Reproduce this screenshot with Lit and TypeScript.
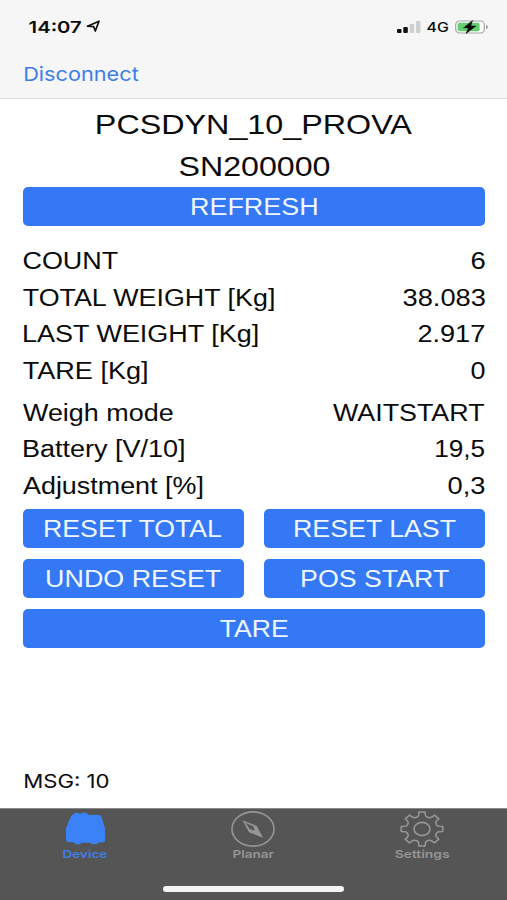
import { LitElement, html, css, svg } from "lit";
import { customElement, property, state } from "lit/decorators.js";

/** A line of text whose glyphs are widened to span a given ink width. */
@customElement("wide-text")
class WideText extends LitElement {
  @property() text = "";
  @property({ type: Number }) span = 0;
  @state() private scale = 1;
  @state() private shift = 0;

  static styles = css`
    :host { display: block; flex: none; white-space: nowrap; }
    .box { display: block; }
    .ink { display: inline-block; transform-origin: 0 50%; vertical-align: top; }
  `;

  firstUpdated() {
    const cs = getComputedStyle(this);
    const ctx = document.createElement("canvas").getContext("2d")!;
    // Measured at ten times the size, so that whole-pixel bounds stay precise.
    ctx.font = `${cs.fontWeight} ${parseFloat(cs.fontSize) * 10}px ${cs.fontFamily}`;
    const m = ctx.measureText(this.text);
    const left = (m.actualBoundingBoxLeft / 10) * 0.45;
    this.scale = this.span / (left + m.actualBoundingBoxRight / 10);
    this.shift = left * this.scale;
  }

  render() {
    return html`<span class="box" style="width:${this.span}px"
      ><span class="ink" style="transform:translateX(${this.shift}px) scaleX(${this.scale})">${this.text}</span></span>`;
  }
}

const wide = (text: string, span: number) => html`<wide-text .text=${text} .span=${span}></wide-text>`;

type Row = [string, number, string, number];

const weights: Row[] = [
  ["COUNT", 94.7, "6", 13.5],
  ["TOTAL WEIGHT [Kg]", 252, "38.083", 81.7],
  ["LAST WEIGHT [Kg]", 235.3, "2.917", 66],
  ["TARE [Kg]", 123.7, "0", 13.5],
];
const status: Row[] = [
  ["Weigh mode", 149.5, "WAITSTART", 151],
  ["Battery [V/10]", 160.7, "19,5", 49],
  ["Adjustment [%]", 179, "0,3", 36.3],
];

const gearPath = (() => {
  let d = "";
  const polar = (r: number, deg: number) => {
    const a = (deg * Math.PI) / 180;
    return `${(22 + r * 1.22 * Math.sin(a)).toFixed(2)} ${(18 - r * Math.cos(a)).toFixed(2)}`;
  };
  for (let i = 0; i < 8; i++) {
    const c = i * 45;
    d += `${i ? "L" : "M"}${polar(17.2, c - 8.5)}L${polar(17.2, c + 8.5)}L${polar(14.4, c + 11)}`;
    d += `Q${polar(12.9, c + 14)} ${polar(12.7, c + 18)}L${polar(12.7, c + 27)}Q${polar(12.9, c + 31)} ${polar(14.4, c + 34)}`;
  }
  return `${d}Z`;
})();

const deviceIcon = svg`<svg class="icon" width="44" height="36" viewBox="0 0 44 36">
  <path fill="#3b82f7" d="M8.300 4.800Q9 3.400 10.800 3.200Q11.500 1.500 13.500 1.500Q15.300 1.500 16.200 2.800L18.200 2.600Q19.200 1.400 21.500 1.400Q24.400 1.400 25.200 3.700L36.500 3.900Q38 4 38.400 5.500Q40 10 41 14.500Q42 16 42 18L42.200 29Q42.200 31.300 40 31.300L35.500 31.600Q34.500 33.400 31.300 33.300Q28.300 33.300 27.500 31.700L18.500 31.700Q17.500 33.500 14.500 33.400Q11.500 33.300 11 31.300L5 30.900Q3 30.600 3 28.500L3 18.500Q3 16.500 4.300 14.500Q5.800 9.500 8.300 4.800Z"/></svg>`;
const compassIcon = svg`<svg class="icon" width="44" height="36" viewBox="0 0 44 36" fill="none" stroke="#969696" stroke-width="1.600">
  <ellipse cx="22" cy="18" rx="21" ry="17.100"/>
  <path fill="#969696" stroke="none" fill-rule="evenodd" d="M11.500 9.300L25.800 14.900L32 26.800L18 21.200ZM14.500 11.800L19.300 18.800L23 15.700ZM22 16.800A1.500 1.300 0 1 0 22 19.400A1.500 1.300 0 1 0 22 16.800Z"/></svg>`;
const gearIcon = svg`<svg class="icon" width="44" height="36" viewBox="0 0 44 36" fill="none" stroke="#969696" stroke-width="1.600" stroke-linejoin="round">
  <path d=${gearPath}/><ellipse cx="22" cy="18" rx="8" ry="6.600"/></svg>`;

@customElement("app-root")
class AppRoot extends LitElement {
  static styles = css`
    :host {
      display: flex; flex-direction: column; box-sizing: border-box;
      width: 507px; height: 900px; overflow: hidden;
      background: #fff; color: #0b0b0b;
      font-family: "Liberation Sans", Arial, sans-serif; font-size: 23px; line-height: 36.6px;
    }
    svg { display: block; flex: none; }
    .top {
      height: 99px; box-sizing: border-box; background: #f6f6f6;
      border-bottom: 1.5px solid #dedede; font-family: Inter, sans-serif;
    }
    .statusbar { display: flex; align-items: center; height: 32px; padding: 10.500px 18.500px 0 28.700px; line-height: 32px; }
    .clock { font-size: 16.500px; font-weight: 600; }
    .arrow { margin-left: 5px; }
    .signal { margin-left: auto; }
    .net { font-size: 13.300px; font-weight: 500; margin: 0 7px 0 6px; }
    .nav { padding-left: 23.700px; font-size: 19.300px; line-height: 62.500px; color: #3d7eea; }
    main { flex: 1; display: flex; flex-direction: column; padding: 5.200px 21.600px 0 22.500px; }
    .title { display: flex; justify-content: center; font-size: 28px; line-height: 41.800px; padding-left: 1px; }
    .btn {
      display: flex; justify-content: center; height: 39px; line-height: 41px;
      border-radius: 5px; background: #3478f6; color: #f0f6ff;
    }
    .refresh { margin: -1px 0 17.300px; }
    .row { display: flex; justify-content: space-between; padding: 0 1px 0 0.700px; }
    .group + .group { margin-top: 5.400px; }
    .grid { display: grid; grid-template-columns: 1fr 1fr; gap: 10.900px 20px; margin-top: 4.300px; }
    .full { grid-column: 1 / -1; }
    .msg { margin: auto 0 7.500px 1.200px; font-family: Inter, sans-serif; font-size: 18.700px; }
    .tabs {
      height: 92px; box-sizing: border-box; background: #555; border-top: 1px solid #8a8a8a;
      display: flex; flex-direction: column; align-items: center; justify-content: space-between;
      font-family: Inter, sans-serif; font-size: 10.800px; font-weight: 600; line-height: 15.500px; color: #969696;
    }
    .items { display: grid; grid-template-columns: repeat(3, 1fr); align-self: stretch; padding: 2px 0.500px 0; }
    .tab { display: flex; flex-direction: column; align-items: center; }
    .active { color: #3f7fe8; }
    .home { width: 181px; height: 6px; border-radius: 3px; background: #f4f4f4; margin-bottom: 8.500px; }
  `;

  private rows(list: Row[]) {
    return html`<div class="group">${list.map(
      ([label, lw, value, vw]) => html`<div class="row">${wide(label, lw)}${wide(value, vw)}</div>`
    )}</div>`;
  }

  render() {
    return html`
      <header class="top">
        <div class="statusbar">
          <div class="clock">${wide("14:07", 52)}</div>
          <svg class="arrow" width="15" height="13" viewBox="0 0 15 13">
            <path d="M1.500 6.200L13 1.200L9.300 11L7.600 6.600Z" fill="none" stroke="#111" stroke-width="1.700" stroke-linejoin="round"/>
          </svg>
          <svg class="signal" width="24" height="14" viewBox="0 0 24 14">
            <rect x="0" y="9" width="4.500" height="4" rx="1" fill="#111"/>
            <rect x="6.300" y="7" width="4.500" height="6" rx="1" fill="#111"/>
            <rect x="12.700" y="4" width="4.500" height="9" rx="1" fill="#cfcfcf"/>
            <rect x="19" y="1" width="4.500" height="12" rx="1" fill="#cfcfcf"/>
          </svg>
          <div class="net">${wide("4G", 21)}</div>
          <svg width="34" height="14" viewBox="0 0 34 14">
            <rect x="0.700" y="1" width="28.600" height="12" rx="3.800" fill="#fbfbfb" stroke="#a5a5a5" stroke-width="1.200"/>
            <rect x="2.600" y="2.800" width="22" height="8.400" rx="2" fill="#62cf70"/>
            <path d="M31 4.800Q33.200 5.500 33.200 7Q33.200 8.500 31 9.200Z" fill="#a5a5a5"/>
            <path d="M17.500 0.500L8.500 7.900H13.500L11 13.600L21 6H15.800Z" fill="#0a0a0a" stroke="#0a0a0a" stroke-width="0.500"/>
          </svg>
        </div>
        <div class="nav">${wide("Disconnect", 114.5)}</div>
      </header>
      <main>
        <div class="title">${wide("PCSDYN_10_PROVA", 316)}</div>
        <div class="title">${wide("SN200000", 150.7)}</div>
        <div class="btn refresh">${wide("REFRESH", 125.5)}</div>
        ${this.rows(weights)}
        ${this.rows(status)}
        <div class="grid">
          <div class="btn">${wide("RESET TOTAL", 178)}</div>
          <div class="btn">${wide("RESET LAST", 162)}</div>
          <div class="btn">${wide("UNDO RESET", 174.7)}</div>
          <div class="btn">${wide("POS START", 147.7)}</div>
          <div class="btn full">${wide("TARE", 67.5)}</div>
        </div>
        <div class="msg">${wide("MSG: 10", 84.3)}</div>
      </main>
      <footer class="tabs">
        <div class="items">
          <div class="tab active">${deviceIcon}${wide("Device", 43.7)}</div>
          <div class="tab">${compassIcon}${wide("Planar", 40.7)}</div>
          <div class="tab">${gearIcon}${wide("Settings", 54)}</div>
        </div>
        <div class="home"></div>
      </footer>
    `;
  }
}
